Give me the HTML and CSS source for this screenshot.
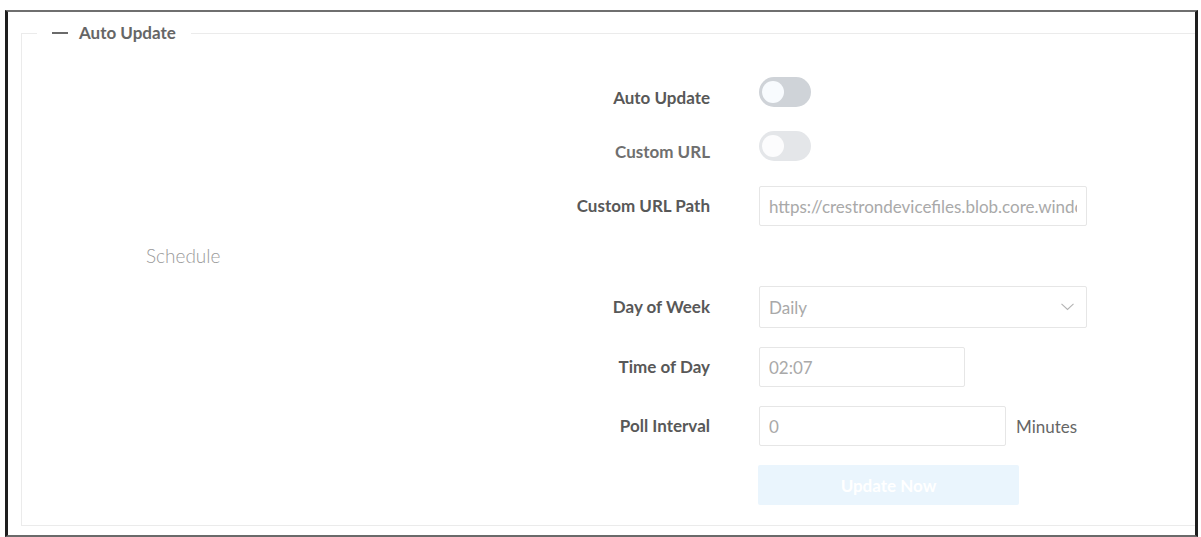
FILE: index.html
```html
<!DOCTYPE html>
<html lang="en">
<head>
<meta charset="utf-8">
<title>Auto Update</title>
<link rel="stylesheet" href="styles.css">
</head>
<body>
<div class="frame">
  <fieldset class="panel">
    <legend class="panel-legend"><span class="collapse-icon"></span><span class="legend-text">Auto Update</span></legend>
    <div class="form">
      <div class="row row-switch">
        <label class="label">Auto Update</label>
        <div class="control"><span class="switch"><span class="knob"></span></span></div>
      </div>
      <div class="row row-switch">
        <label class="label label-light">Custom URL</label>
        <div class="control"><span class="switch switch-disabled"><span class="knob"></span></span></div>
      </div>
      <div class="row row-path">
        <label class="label" for="url">Custom URL Path</label>
        <div class="control"><input id="url" class="input input-wide" type="text" readonly value="https://crestrondevicefiles.blob.core.windows.net"></div>
      </div>
      <div class="section-title">Schedule</div>
      <div class="row">
        <label class="label">Day of Week</label>
        <div class="control">
          <div class="input input-wide select">
            <span>Daily</span>
            <svg class="chevron" width="13" height="8" viewBox="0 0 13 8"><polyline points="0.5,0.8 6.5,6.5 12.5,0.8" fill="none" stroke="#b4b4b4" stroke-width="1.1"/></svg>
          </div>
        </div>
      </div>
      <div class="row">
        <label class="label" for="tod">Time of Day</label>
        <div class="control"><input id="tod" class="input input-time" type="text" readonly value="02:07"></div>
      </div>
      <div class="row">
        <label class="label" for="poll">Poll Interval</label>
        <div class="control"><input id="poll" class="input input-poll" type="text" readonly value="0"><span class="unit">Minutes</span></div>
      </div>
      <div class="row row-last">
        <span class="label"></span>
        <div class="control"><button class="btn" type="button">Update Now</button></div>
      </div>
    </div>
  </fieldset>
</div>
</body>
</html>
```

FILE: styles.css
```css
html, body {
  margin: 0;
  padding: 0;
  background: #ffffff;
  font-family: Lato, "Open Sans", "Liberation Sans", sans-serif;
}

.frame {
  box-sizing: border-box;
  margin: 10px 0 0 5px;
  width: 1193px;
  height: 527px;
  border-top: 2px solid #6f6f6f;
  border-bottom: 2px solid #6a6a6a;
  border-left: 3px solid #1e1e1e;
  border-right: 3px solid #1e1e1e;
  padding: 11px 0 11px 13px;
  overflow: hidden;
  background: #fff;
}

.panel {
  margin: 0;
  padding: 35px 0 20px 15px;
  border: 1px solid #ebebeb;
  border-right: none;
  min-inline-size: 0;
}

.panel-legend {
  padding: 0 15px;
  line-height: 20px;
  height: 20px;
  display: flex;
  align-items: center;
  color: #666;
  font-size: 17px;
  font-weight: 700;
}

.collapse-icon {
  display: inline-block;
  width: 16px;
  height: 2px;
  background: #6a6a6a;
  margin-right: 11px;
}

.form {
  display: flex;
  flex-direction: column;
}

.row {
  display: grid;
  grid-template-columns: 673px 1fr;
  column-gap: 49px;
  align-items: center;
  min-height: 40px;
  margin-bottom: 19px;
}

.row-switch {
  align-items: start;
  margin-bottom: 14px;
}

.row-path {
  margin-bottom: 0;
}

.row-last {
  margin-bottom: 0;
}

.label {
  text-align: right;
  line-height: 40px;
  font-size: 17px;
  font-weight: 700;
  color: #585858;
}

.label-light {
  color: #6f6f6f;
}

.control {
  display: flex;
  align-items: center;
}

.switch {
  position: relative;
  display: inline-block;
  width: 52px;
  height: 30px;
  border-radius: 15px;
  background: #cfd3d8;
  margin-top: -1px;
}

.switch .knob {
  position: absolute;
  top: 4px;
  left: 3px;
  width: 22px;
  height: 22px;
  border-radius: 50%;
  background: #f8fbfe;
}

.switch-disabled {
  background: #e4e6e9;
}

.switch-disabled .knob {
  background: #fcfcfd;
}

.input {
  box-sizing: border-box;
  height: 40px;
  margin: 0;
  border: 1px solid #e6e6e6;
  border-radius: 2px;
  padding: 0 9px;
  display: flex;
  align-items: center;
  font-family: Lato, "Open Sans", sans-serif;
  font-size: 17px;
  color: #a9a9a9;
  white-space: nowrap;
  overflow: hidden;
  background: #fff;
  outline: none;
}

.input-wide {
  width: 328px;
}

.select {
  justify-content: space-between;
  padding-right: 12px;
  height: 42px;
}

.chevron {
  display: block;
}

.input-time {
  width: 206px;
}

.input-poll {
  width: 247px;
}

.unit {
  margin-left: 10px;
  font-size: 17px;
  color: #666;
}

.section-title {
  line-height: 60px;
  height: 60px;
  padding-left: 109px;
  font-size: 19px;
  font-weight: 300;
  color: #9a9a9a;
}

.btn {
  box-sizing: border-box;
  width: 261px;
  height: 40px;
  margin-left: -1px;
  border: none;
  border-radius: 2px;
  background: #eaf5fd;
  color: #ffffff;
  font-family: Lato, sans-serif;
  font-size: 17px;
  font-weight: 700;
}
```
